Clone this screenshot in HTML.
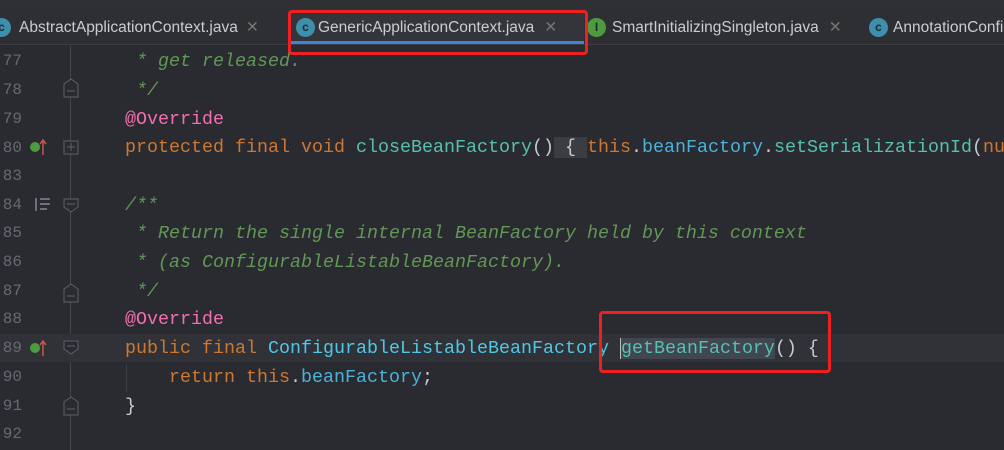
<html><head><style>
body{margin:0;width:1004px;height:450px;background:#2a2b30;overflow:hidden;position:relative;font-family:"Liberation Mono",monospace}
.wrap{position:absolute;left:0;top:0;width:1004px;height:450px;overflow:hidden}
.top{position:absolute;left:0;top:0;width:1004px;height:11px;background:#2e3034;border-bottom:1px solid #3a3c40}
.tabs{position:absolute;left:0;top:11px;width:1004px;height:33px;background:#2d2f33;border-bottom:1px solid #3a3c40;font-family:"Liberation Sans",sans-serif;font-size:15.5px;color:#c9ccd1;overflow:hidden}
.tab{position:absolute;top:0;height:33px;line-height:33px;white-space:nowrap}
.ic{position:absolute;top:7px;width:19px;height:19px;border-radius:50%;font-size:12px;line-height:19px;text-align:center;color:#1e2a30;font-weight:bold}
.x{color:#777;margin-left:8px}
.sel{background:#34353a;border-bottom:3px solid #3d83e0;height:30px}
.red{position:absolute;border:3px solid #f02020;border-radius:4px}
.ln{position:absolute;left:0;width:22px;text-align:right;color:#666a70;font-size:16px;overflow:hidden}
.code{position:absolute;left:0;font-size:18.33px;white-space:pre;height:28.7px;line-height:28.7px;color:#c8ccd2}
.k{color:#cc7832}.a{color:#f16fb0}.c{color:#629755;font-style:italic}.m{color:#56c1b0}.f{color:#4ab3d8}.t{color:#4ec8e6}
</style></head><body><div class="wrap">
<div class="top"></div>
<div class="tabs">
<div class="tab" style="left:-8px"><span class="ic" style="left:0;background:#3e8fad">c</span><span style="margin-left:27px">AbstractApplicationContext.java</span><span class="x">✕</span></div>
<div class="tab sel" style="left:288px;width:296px"><span class="ic" style="left:8px;background:#3e8fad">c</span><span style="margin-left:30px">GenericApplicationContext.java</span><span class="x" style="margin-left:10px">✕</span></div>
<div class="tab" style="left:587px"><span class="ic" style="left:0;background:#4e9a40">I</span><span style="margin-left:25px">SmartInitializingSingleton.java</span><span class="x" style="margin-left:10px">✕</span></div>
<div class="tab" style="left:869px"><span class="ic" style="left:0;background:#3e8fad">c</span><span style="margin-left:24px">AnnotationConfigApp</span></div>
</div>
<div class="red" style="left:288px;top:10px;width:294px;height:39px"></div>
<div style="position:absolute;left:70px;top:46px;width:1px;height:404px;background:#45474c"></div>
<div style="position:absolute;left:0;top:334px;width:1004px;height:28px;background:#303238"></div>
<div style="position:absolute;left:126px;top:364px;width:1px;height:28px;background:#3c3e43"></div>

<div class="ln" style="top:52px">77</div><div class="ln" style="top:81px">78</div><div class="ln" style="top:110px">79</div><div class="ln" style="top:139px">80</div><div class="ln" style="top:167px">83</div><div class="ln" style="top:196px">84</div><div class="ln" style="top:224px">85</div><div class="ln" style="top:253px">86</div><div class="ln" style="top:282px">87</div><div class="ln" style="top:310px">88</div><div class="ln" style="top:339px">89</div><div class="ln" style="top:368px">90</div><div class="ln" style="top:397px">91</div><div class="ln" style="top:425px">92</div>

<svg style="position:absolute;left:0;top:0" width="1004" height="450">
<g fill="#2a2b30" stroke="#5d6066" stroke-width="1">
<path d="M64 84l7-5 7 5v13h-14z"/><path d="M64 141h14v13h-14z"/><path d="M64 199h14v8l-7 5-7-5z"/><path d="M64 289l7-5 7 5v13h-14z"/><path d="M64 341h14v8l-7 5-7-5z"/><path d="M64 402l7-5 7 5v13h-14z"/>
</g>
<g stroke="#5d6066"><path d="M67 91h8M67 147h8M71 143v8M67 204h8M67 296h8M67 346h8M67 409h8"/></g>
<g stroke="#6d7076" stroke-width="2"><path d="M36 198v13M40 199h10M40 204h10M40 209h7"/></g>
<circle cx="35" cy="147" r="5" fill="#4e9a40"/><path d="M43 155v-14m-3 3l3-4 3 4" stroke="#d05050" stroke-width="1.5" fill="none"/>
<circle cx="35" cy="348" r="5" fill="#4e9a40"/><path d="M43 356v-14m-3 3l3-4 3 4" stroke="#d05050" stroke-width="1.5" fill="none"/>
</svg>

<div class="code" style="top:48px;left:125px"><span class="c"> * get released.</span></div>
<div class="code" style="top:77px;left:125px"><span class="c"> */</span></div>
<div class="code" style="top:106px;left:125px"><span class="a">@Override</span></div>
<div class="code" style="top:134px;left:125px"><span class="k">protected final void </span><span class="m">closeBeanFactory</span>()<span style="background:#3b3d42"> { </span><span class="k">this</span>.<span class="f">beanFactory</span>.<span class="m">setSerializationId</span>(<span class="k">nu</span></div>
<div class="code" style="top:192px;left:125px"><span class="c">/**</span></div>
<div class="code" style="top:220px;left:125px"><span class="c"> * Return the single internal BeanFactory held by this context</span></div>
<div class="code" style="top:249px;left:125px"><span class="c"> * (as ConfigurableListableBeanFactory).</span></div>
<div class="code" style="top:278px;left:125px"><span class="c"> */</span></div>
<div class="code" style="top:306px;left:125px"><span class="a">@Override</span></div>
<div class="code" style="top:335px;left:125px"><span class="k">public final </span><span class="t">ConfigurableListableBeanFactory</span> <span class="m" style="background:#414650;border-left:1px solid #bbb">getBeanFactory</span>() {</div>
<div class="code" style="top:364px;left:125px">    <span class="k">return this</span>.<span class="f">beanFactory</span>;</div>
<div class="code" style="top:393px;left:125px">}</div>
<div class="red" style="left:599px;top:311px;width:226px;height:56px"></div>
</div></body></html>
